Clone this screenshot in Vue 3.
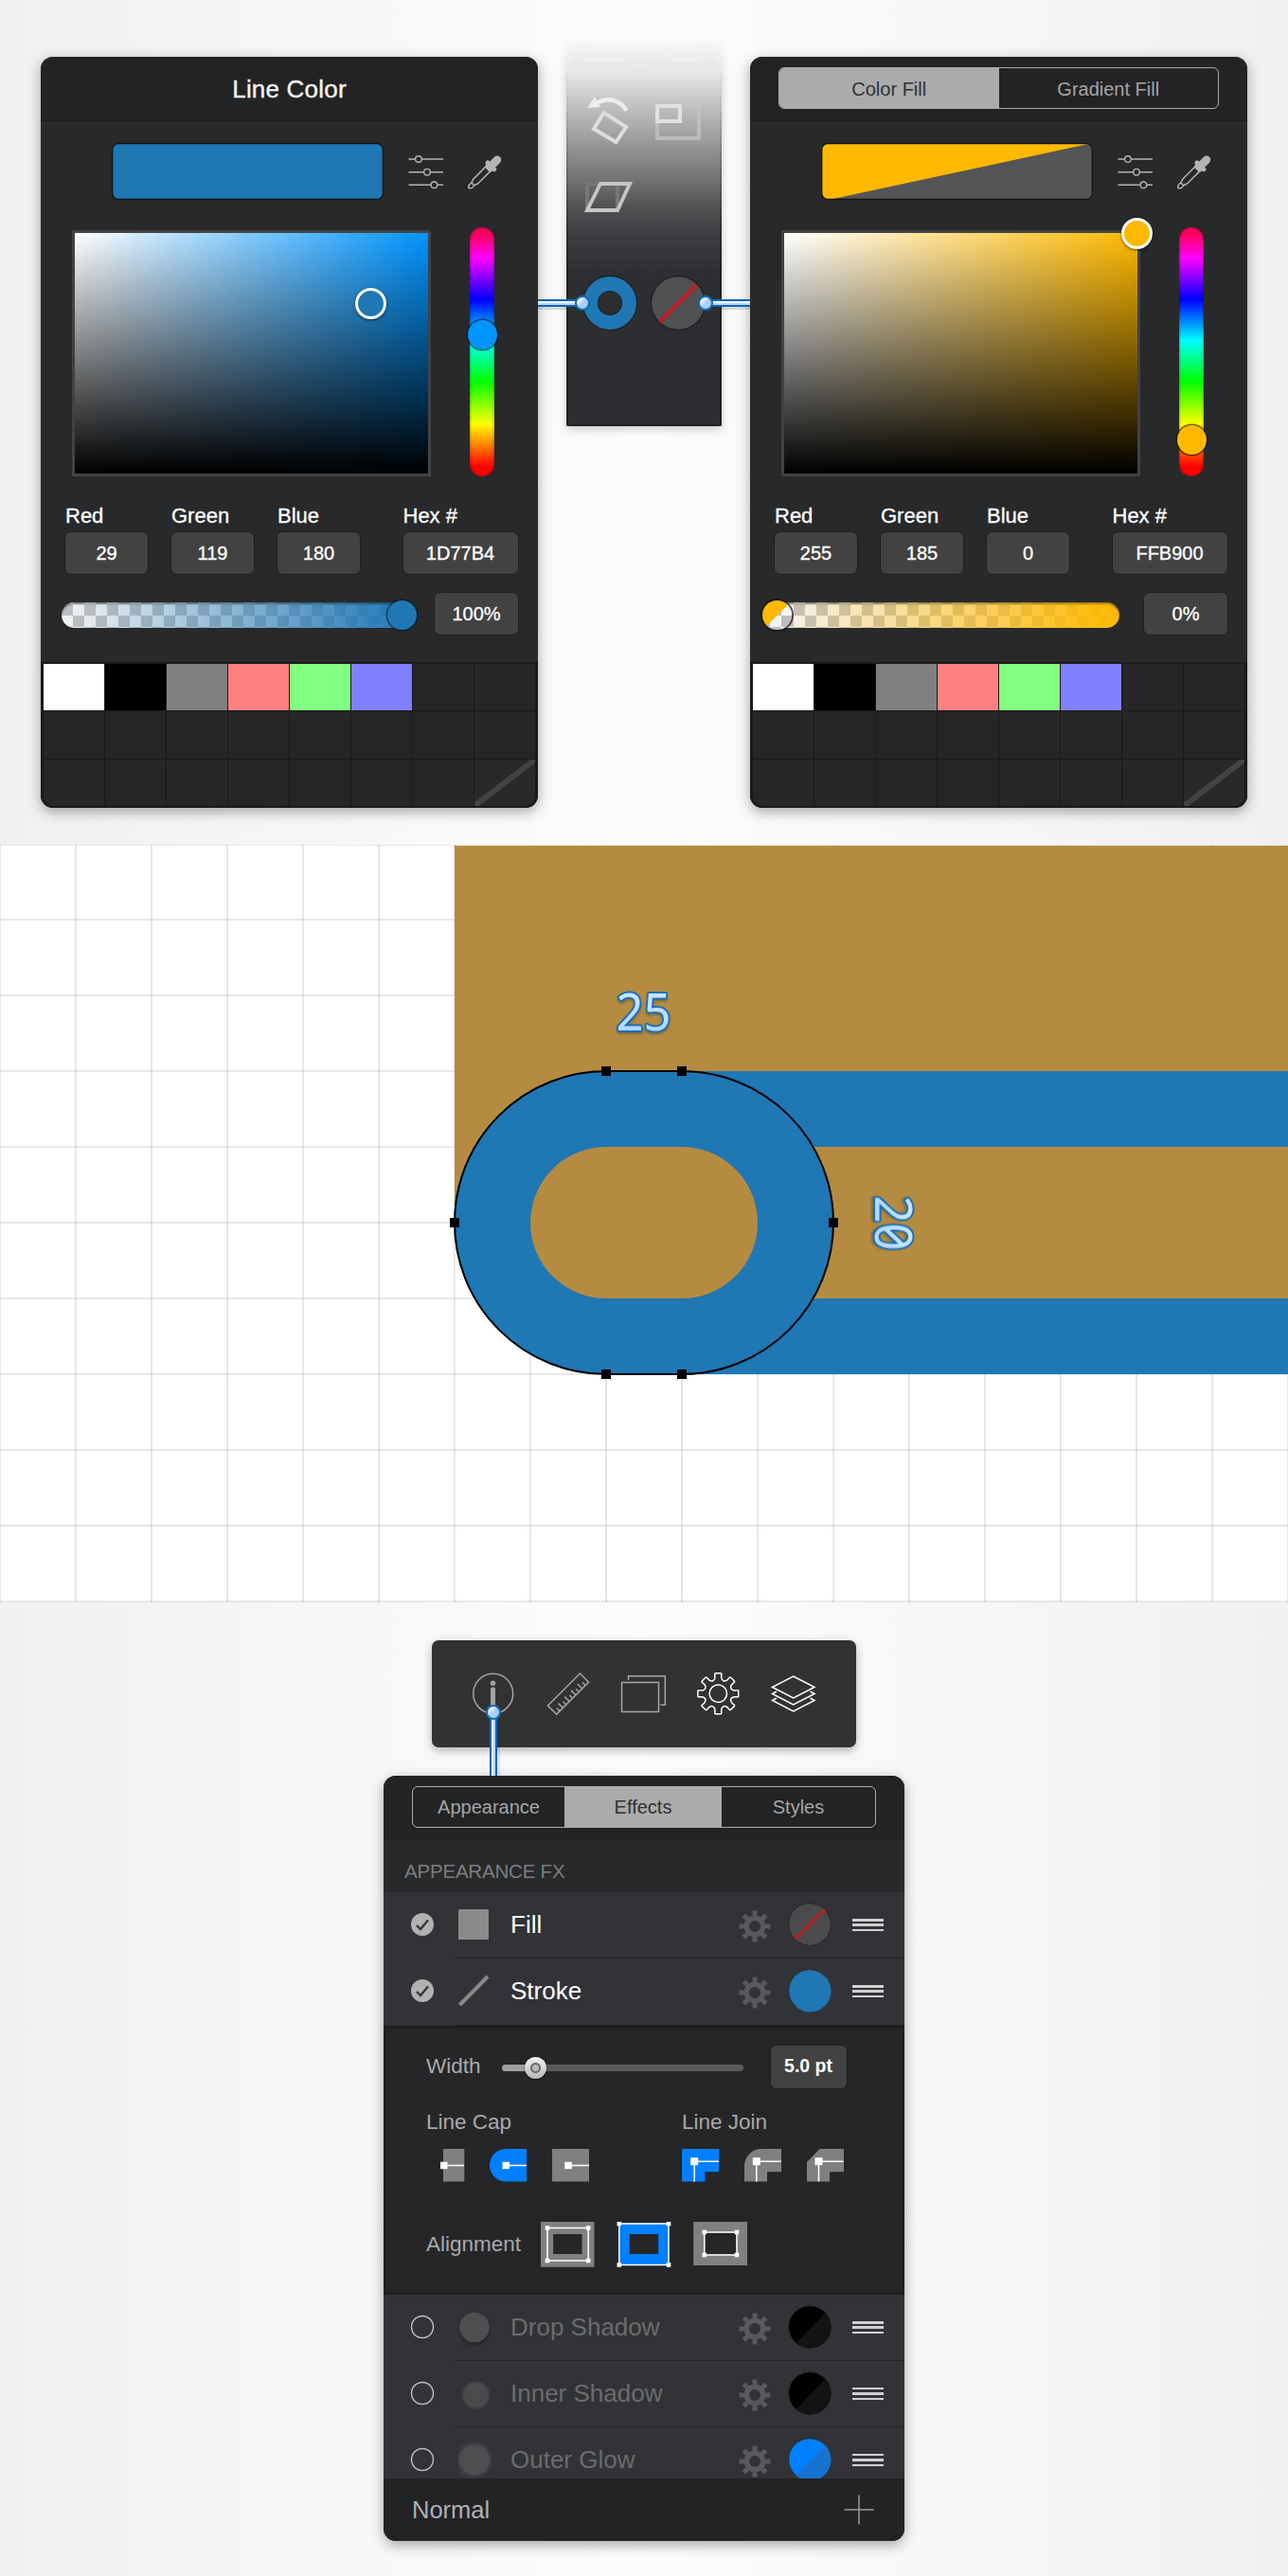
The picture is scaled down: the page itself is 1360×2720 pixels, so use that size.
<script setup>
const panels = [
  {
    id: 'line', title: 'Line Color', color: '#1f77b4', hue: '#0094ff',
    fields: [['Red', '29'], ['Green', '119'], ['Blue', '180'], ['Hex #', '1D77B4']],
    alpha: '100%', pick: { left: 312.5, top: 74.5 }, hueY: 113, alphaX: 359,
  },
  {
    id: 'fill', tabs: ['Color Fill', 'Gradient Fill'], color: '#ffb900', hue: '#ffb900',
    fields: [['Red', '255'], ['Green', '185'], ['Blue', '0'], ['Hex #', 'FFB900']],
    alpha: '0%', pick: { left: 373, top: 0.5 }, hueY: 224, alphaX: 6.5,
  },
]

const swatches = ['#ffffff', '#000000', '#808080', '#ff8080', '#80ff80', '#8080ff']
const cells = Array.from({ length: 24 }, (_, i) => swatches[i] || null)

const effects = [
  { name: 'Fill', on: true, icon: 'square', kind: 'none' },
  { name: 'Stroke', on: true, icon: 'line', kind: 'solid', a: '#1f77b4', b: '#1f77b4' },
]
const moreEffects = [
  { name: 'Drop Shadow', icon: 'drop', a: '#000', b: '#131313' },
  { name: 'Inner Shadow', icon: 'inner', a: '#000', b: '#131313' },
  { name: 'Outer Glow', icon: 'outer', a: '#0080ff', b: '#1773d0' },
]

const range = (from, to, step) => {
  const out = []
  for (let v = from; v <= to; v += step) out.push(v)
  return out
}
const gridX = range(0, 1360, 80)
const gridY = range(971, 1691, 80)
const nodes = [[640, 1131], [720, 1131], [480, 1291], [880, 1291], [640, 1451], [720, 1451]]

function gear(outer, root, tip, base, valley) {
  const pt = (r, t) => `${(r * Math.sin(t)).toFixed(2)} ${(-r * Math.cos(t)).toFixed(2)}`
  let d = ''
  for (let i = 0; i < 8; i++) {
    const t = (i * Math.PI) / 4
    d += `${i ? 'L' : 'M'}${pt(root, t - base)} L${pt(outer - 1, t - tip)} Q${pt(outer, t - tip)} ${pt(outer, t - tip + 0.05)} L${pt(outer, t + tip - 0.05)} Q${pt(outer, t + tip)} ${pt(outer - 1, t + tip)} L${pt(root, t + base)} Q${pt(valley, t + Math.PI / 8)} ${pt(root, t + Math.PI / 4 - base)} `
  }
  return d + 'Z'
}
const bigGear = gear(21.6, 17, 0.17, 0.2, 12.6)
const smallGear = gear(16.6, 11.6, 0.17, 0.2, 11.4)
const ticks = range(1, 9, 1)
</script>

<template>
  <main class="page">
    <section class="pickers">
      <template v-for="p in panels" :key="p.id">
        <article class="panel picker" :class="p.id">
          <header class="picker-head">
            <h2 v-if="p.title">{{ p.title }}</h2>
            <div v-else class="tabs two">
              <span class="tab active">{{ p.tabs[0] }}</span>
              <span class="tab">{{ p.tabs[1] }}</span>
            </div>
          </header>

          <div class="preview-row">
            <svg class="preview" width="287" height="60">
              <defs><clipPath :id="'clip-' + p.id"><rect x=".5" y=".5" width="286" height="59" rx="6.500" /></clipPath></defs>
              <g :clip-path="`url(#clip-${p.id})`">
                <rect width="287" height="60" :fill="p.color" />
                <path v-if="p.id === 'fill'" d="M8 60 L287 0 V60Z" fill="#545556" />
              </g>
              <rect x=".7" y=".7" width="285.600" height="58.600" rx="6" fill="none" stroke="#101315" stroke-width="1.300" />
            </svg>
            <svg class="sliders" width="38" height="38" fill="none" stroke="#b4b4b5" stroke-width="1.400">
              <path d="M.5 5H7.500M14.300 5H37M.5 18.700H16.500M23.500 18.700H37M.5 32.300H24M31 32.300H37" />
              <circle cx="10.900" cy="5" r="3.300" /><circle cx="20" cy="18.700" r="3.300" /><circle cx="27.400" cy="32.300" r="3.300" />
            </svg>
            <svg class="dropper" width="40" height="40">
              <g transform="translate(19.700 20) rotate(45)" fill="#b4b4b5">
                <rect x="-4.300" y="-23" width="8.600" height="14" rx="4.200" />
                <rect x="-7.300" y="-12" width="14.600" height="5" rx="2.500" />
                <rect x="-4.500" y="-8" width="9" height="4" rx="1" />
                <path d="M-3.400 -5V13.500L-2 17.500H2L3.400 13.500V-5M-2 17.500C-3 22 0 23.500 0 23.500C0 23.500 3 22 2 17.500" fill="none" stroke="#b4b4b5" stroke-width="1.500" />
              </g>
            </svg>
          </div>

          <div class="spectrum-row">
            <div class="field" :class="p.id">
              <i class="pick" :style="{ left: p.pick.left + 'px', top: p.pick.top + 'px', background: p.color }"></i>
            </div>
            <div class="hue"><i class="knob" :style="{ top: p.hueY + 'px', background: p.hue }"></i></div>
          </div>

          <div class="values">
            <label v-for="f in p.fields" :key="f[0]" class="value">
              <span>{{ f[0] }}</span>
              <b class="box">{{ f[1] }}</b>
            </label>
          </div>

          <div class="alpha-row">
            <div class="alpha" :class="p.id">
              <i class="knob" :class="'alpha-' + p.id" :style="{ left: p.alphaX + 'px' }"></i>
            </div>
            <b class="box">{{ p.alpha }}</b>
          </div>

          <div class="cells">
            <span v-for="(c, i) in cells" :key="i" class="cell" :class="{ none: i === 23 }" :style="c ? { background: c } : null"></span>
          </div>
        </article>

        <aside v-if="p.id === 'line'" class="tools">
          <svg width="164" height="430" viewBox="598 20 164 430">
            <defs>
              <linearGradient id="fade" x1="0" y1="40" x2="0" y2="290" gradientUnits="userSpaceOnUse">
                <stop offset="0" stop-color="#fbfbfb" />
                <stop offset=".06" stop-color="#f6f6f6" />
                <stop offset=".14" stop-color="#e9e9ea" />
                <stop offset=".32" stop-color="#b8b8b9" />
                <stop offset=".59" stop-color="#747475" />
                <stop offset=".72" stop-color="#505053" />
                <stop offset=".85" stop-color="#3b3c3f" />
                <stop offset="1" stop-color="#2d2e31" />
              </linearGradient>
              <linearGradient id="edge" x1="0" y1="40" x2="0" y2="290" gradientUnits="userSpaceOnUse">
                <stop offset="0" stop-color="#202124" stop-opacity="0" />
                <stop offset=".3" stop-color="#202124" stop-opacity=".04" />
                <stop offset=".7" stop-color="#202124" stop-opacity=".3" />
                <stop offset="1" stop-color="#202124" />
              </linearGradient>
            </defs>
            <path d="M598 40H762V447Q762 450 759 450H601Q598 450 598 447Z" fill="url(#fade)" />
            <path d="M599 40V448.500Q599 449 600 449H760Q761 449 761 448.500V40" fill="none" stroke="url(#edge)" stroke-width="2" />
            <g fill="none" stroke="#f7f7f7" stroke-width="3.500" opacity=".8">
              <path d="M620 44V63H660V44" /><circle cx="632" cy="54" r="4" /><path d="M645 58L651 50L656 58" />
              <path d="M700 42L704 60M708 42V63H739V42" />
            </g>
            <g fill="none" stroke="#e6e6e6" stroke-width="4">
              <path d="M631 108C643 102 655 106 661.500 116.500" stroke="#ededed" stroke-width="4.500" />
              <path d="M620 114L628 102L634 113Z" fill="#ededed" stroke="none" />
              <path d="M637.500 119L661 134L650.500 150L627 136Z" stroke="#dedede" />
              <rect x="694" y="112" width="44" height="34" stroke="#c4c4c5" opacity=".75" />
              <rect x="694" y="112" width="24" height="16" stroke="#e2e2e2" />
              <path d="M620 222V194H652V222Z" stroke="#77777a" />
              <path d="M634 194H665L652 222H620Z" stroke="#c6c6c6" stroke-width="3.800" />
            </g>
            <circle cx="644" cy="320" r="20.500" fill="none" stroke="#1f2023" stroke-width="17.500" />
            <circle cx="644" cy="320" r="20.500" fill="none" stroke="#1f77b4" stroke-width="15" />
            <circle cx="716" cy="320" r="28.500" fill="#505153" stroke="#232427" stroke-width="1.500" />
            <path d="M696.500 340L735.500 301" stroke="#b02426" stroke-width="5" />
          </svg>
        </aside>
      </template>
      <i class="wire left"></i>
      <i class="wire right"></i>
    </section>

    <svg class="canvas" width="1360" height="800" viewBox="0 892 1360 800">
      <rect y="892" width="1360" height="800" fill="#fff" />
      <g stroke="#000" stroke-opacity=".09" stroke-width="2">
        <line v-for="x in gridX" :key="'x' + x" :x1="x" :x2="x" y1="892" y2="1692" />
        <line v-for="y in gridY" :key="'y' + y" x1="0" x2="1360" :y1="y" :y2="y" />
        <line x1="0" x2="1360" y1="892" y2="892" />
      </g>
      <path d="M480 893H1360V1451H640A160 160 0 0 1 480 1291Z" fill="#b58b42" />
      <path d="M640 1131H1360V1211H640ZM640 1371H1360V1451H640Z" fill="#1f77b4" />
      <rect x="520" y="1171" width="320" height="240" rx="120" fill="#b58b42" stroke="#1f77b4" stroke-width="80" />
      <rect x="480" y="1131" width="400" height="320" rx="160" fill="none" stroke="#000" stroke-width="2" />
      <rect v-for="n in nodes" :key="n.join()" :x="n[0] - 5" :y="n[1] - 5" width="10" height="10" fill="#000" />
      <defs>
        <linearGradient id="digits" x1="0" y1="0" x2="0" y2="1"><stop offset="0" stop-color="#d6edff" /><stop offset="1" stop-color="#a9d2fb" /></linearGradient>
      </defs>
      <g class="measure">
        <g transform="translate(679.500 1088) scale(.94 1)"><text text-anchor="middle">25</text></g>
        <g transform="translate(944 1291.500) rotate(90) scale(.94 1)">
          <text x="0" y="20" text-anchor="middle">20</text>
        </g>
      </g>
    </svg>

    <section class="inspector">
      <nav class="toolbar">
        <svg width="448" height="113" viewBox="456 1732 448 113" fill="none" stroke-width="1.500">
          <g stroke="#a4a4a6">
            <circle cx="520.700" cy="1788.300" r="21" />
            <circle cx="520.500" cy="1777.200" r="2.800" fill="#a4a4a6" stroke="none" />
            <rect x="518" y="1781.500" width="5" height="24" rx="2" fill="#a4a4a6" stroke="none" />
            <g transform="translate(600 1788.600) rotate(-45)">
              <rect x="-24" y="-6.500" width="48" height="13" />
              <path v-for="t in ticks" :key="t" :d="`M${-24 + t * 4.8} 6.500v${t % 2 ? -4.500 : -7}`" />
            </g>
            <rect x="656.500" y="1776.500" width="39" height="31" />
            <path d="M663.500 1774V1769.700H702.300V1800.300H697.500" />
          </g>
          <g stroke="#fff">
            <g transform="translate(758.300 1788.300)"><path :d="bigGear" /><circle r="9.200" /></g>
            <path d="M837.700 1770L860 1781.500L837.700 1793L815.500 1781.500Z" />
            <path d="M820 1786L815.500 1788.500L837.700 1800L860 1788.500L855.500 1786" />
            <path d="M820 1793L815.500 1795.500L837.700 1807L860 1795.500L855.500 1793" />
          </g>
        </svg>
      </nav>
      <i class="wire down"></i>

      <article class="panel effects">
        <header class="effects-head">
          <div class="tabs three">
            <span class="tab">Appearance</span>
            <span class="tab active">Effects</span>
            <span class="tab">Styles</span>
          </div>
        </header>
        <h3>APPEARANCE FX</h3>

        <template v-for="(group, g) in [effects, moreEffects]" :key="g">
          <div v-if="g === 1" class="stroke-options">
            <div class="width-row">
              <span>Width</span>
              <div class="track"><i class="thumb"></i></div>
              <b class="box bold">5.0 pt</b>
            </div>
            <div class="cap-join">
              <div class="option">
                <span>Line Cap</span>
                <svg width="180" height="35" viewBox="450 2268 180 35">
                  <rect x="468" y="2268" width="22.300" height="34.500" fill="#808080" />
                  <path d="M556 2268H534.200A17.250 17.250 0 0 0 534.200 2302.500H556Z" fill="#0080ff" />
                  <rect x="583" y="2268" width="39" height="34.500" fill="#808080" />
                  <g fill="#fff">
                    <path d="M465 2281.700h7.500v7.500h-7.500zM472 2284.800h18v1.500h-18z" />
                    <path d="M530.500 2281.700h7.500v7.500h-7.500zM537 2284.800h19v1.500h-19z" />
                    <path d="M596.300 2281.700h7.500v7.500h-7.500zM603 2284.800h19v1.500h-19z" />
                  </g>
                </svg>
              </div>
              <div class="option">
                <span>Line Join</span>
                <svg width="180" height="35" viewBox="720 2268 180 35">
                  <path d="M720 2268H759V2292.300H744.400V2302.500H720Z" fill="#0080ff" />
                  <path d="M786 2302.500V2286A18 18 0 0 1 804 2268H825V2292.300H810V2302.500Z" fill="#808080" />
                  <path d="M852 2302.500V2282L865.500 2268H891V2292.300H876V2302.500Z" fill="#808080" />
                  <path v-for="x in [733.2, 798.8, 864.5]" :key="x" :d="`M${x - 4} 2277.300h8v8h-8zM${x - 0.75} 2282h1.500v20.500h-1.500zM${x} 2280.500h26v1.500h-26z`" fill="#fff" />
                </svg>
              </div>
            </div>
            <div class="align-row">
              <span>Alignment</span>
              <svg width="220" height="48" viewBox="571 2345 220 48" fill="none">
                <path fill-rule="evenodd" d="M571 2345h56.500v47.700h-56.500zM584.200 2358v21h30.300v-21z" fill="#808080" />
                <path fill-rule="evenodd" d="M654 2346.500h52v44.500h-52zM664.800 2358v21h30.400v-21z" fill="#0080ff" />
                <path fill-rule="evenodd" d="M732.200 2345h56.800v46h-56.800zM744 2356.500v23h33.500v-23z" fill="#808080" />
                <g v-for="b in [[578, 2351.5, 43.2, 34.5], [653.8, 2347, 52.2, 43.5], [743.8, 2356, 34.2, 24]]" :key="b[0]">
                  <rect :x="b[0]" :y="b[1]" :width="b[2]" :height="b[3]" stroke="#fff" stroke-width="1.500" />
                  <path v-for="c in 4" :key="c" :d="`M${b[0] + (c % 2) * b[2] - 2.3} ${b[1] + (c > 2 ? b[3] : 0) - 2.3}h4.600v4.600h-4.600z`" fill="#fff" />
                </g>
              </svg>
            </div>
          </div>

          <div class="rows" :class="{ clipped: g === 1 }">
            <div v-for="e in group" :key="e.name" class="row" :class="{ off: !e.on }">
              <svg class="check" width="26" height="26" viewBox="-13 -13 26 26">
                <template v-if="e.on">
                  <circle r="12" fill="#b1b1b2" />
                  <path d="M-6 1L-2 5L6 -4.500" fill="none" stroke="#323336" stroke-width="2.300" />
                </template>
                <circle v-else r="11.500" fill="none" stroke="#c2c2c3" stroke-width="1.400" />
              </svg>
              <div class="row-main">
                <svg class="glyph" width="36" height="42" viewBox="-18 -21 36 42">
                  <rect v-if="e.icon === 'square'" x="-17" y="-16" width="32" height="32" rx="1" fill="#8a8a8a" />
                  <path v-else-if="e.icon === 'line'" d="M-15.500 15L14 -15" stroke="#8a8a8a" stroke-width="4" />
                  <circle v-else-if="e.icon === 'drop'" cy=".5" r="15.800" fill="#4d4e50" class="drop" />
                  <circle v-else-if="e.icon === 'inner'" cx="1.500" cy="2" r="14" fill="#4a4b4d" class="soft" />
                  <circle v-else cy=".5" r="16" fill="#4d4e50" class="glow" />
                </svg>
                <span class="name">{{ e.name }}</span>
                <svg class="cog" width="36" height="36" viewBox="-18 -18 36 36">
                  <path :d="smallGear" fill="#58595c" /><circle r="6" fill="#323336" />
                </svg>
                <svg class="tint" width="48" height="48" viewBox="-24 -24 48 48">
                  <template v-if="e.kind === 'none'">
                    <circle r="22.300" fill="#4b4b4d" stroke="#262729" />
                    <path d="M-15.500 15.500L15.500 -15.500" stroke="#b02426" stroke-width="3.500" />
                  </template>
                  <template v-else>
                    <circle r="22.300" :fill="e.a" stroke="#262729" stroke-width=".8" />
                    <path d="M-14.500 17A22.300 22.300 0 0 0 16.500 -15Z" :fill="e.b" />
                  </template>
                </svg>
                <span class="grip"></span>
              </div>
            </div>
          </div>
        </template>

        <footer>
          <span>Normal</span>
          <svg width="32" height="32" fill="none" stroke="#9c9c9d" stroke-width="1.500"><path d="M.5 16H31.500M16 .5V31.500" /></svg>
        </footer>
      </article>
    </section>
  </main>
</template>

<style>
body { margin: 0; }
</style>

<style scoped>
.page {
  width: 1360px;
  height: 2720px;
  overflow: hidden;
  font-family: "Liberation Sans", Arial, sans-serif;
  background: linear-gradient(90deg, #f0f0f0 0, #f5f5f5 17%, #f9f9f9 37%, #fcfcfc 50%, #f9f9f9 63%, #f5f5f5 83%, #f0f0f0 100%);
}
h2, h3 { margin: 0; font-weight: 400; }
.panel {
  display: flex;
  flex-direction: column;
  overflow: hidden;
  border-radius: 13px;
  background: #28292b;
  box-shadow: 0 4px 14px rgba(0, 0, 0, .35);
}
.pickers {
  position: relative;
  display: flex;
  align-items: flex-start;
  gap: 30px;
  height: 892px;
  padding-left: 43px;
  box-sizing: border-box;
}
.picker { width: 525px; height: 793px; margin-top: 60px; flex: none; }
.picker-head {
  display: flex;
  align-items: center;
  justify-content: center;
  height: 68px;
  box-sizing: border-box;
  background: #222325;
  border-bottom: 1px solid #1f2022;
}
.picker-head h2 {
  font-size: 26px;
  line-height: 30px;
  color: #f2f2f2;
  letter-spacing: .2px;
  -webkit-text-stroke: .4px #f2f2f2;
}
.tabs {
  display: grid;
  height: 44px;
  box-sizing: border-box;
  overflow: hidden;
  border: 1.500px solid #ababab;
  border-radius: 6px;
}
.tabs.two { width: 465px; grid-template-columns: 1fr 1fr; margin-top: -2px; }
.tabs.three { width: 490px; grid-template-columns: 160px 166px 1fr; }
.tab { font-size: 20px; line-height: 44px; text-align: center; color: #a5a5a6; }
.tabs.three .tab { line-height: 43px; }
.tab.active { background: #ababab; color: #303133; }
.preview-row { display: flex; height: 60px; padding: 23px 0 0 74.500px; }
.sliders { margin: 12px 0 0 26.500px; }
.dropper { margin: 11px 0 0 23px; }
.spectrum-row { display: flex; height: 263px; margin-top: 29px; padding-left: 33px; }
.field {
  position: relative;
  width: 373px;
  height: 254px;
  margin-top: 3px;
  border: 3px solid #424244;
}
.field.line { background: linear-gradient(0deg, #000, transparent), linear-gradient(90deg, #fff, #0094ff); }
.field.fill { background: linear-gradient(0deg, #000, transparent), linear-gradient(90deg, #fff, #ffb900); }
.pick {
  position: absolute;
  width: 27px;
  height: 27px;
  margin: -17px 0 0 -17px;
  border: 3.500px solid #fff;
  border-radius: 50%;
  box-shadow: 0 1px 3px rgba(0, 0, 0, .6);
}
.hue {
  position: relative;
  width: 26px;
  height: 263px;
  margin-left: 41px;
  border-radius: 13px;
  background: linear-gradient(180deg, #ff0060 3%, #ff00ff 12.500%, #0000ff 29%, #00ffff 45.500%, #00ff00 62%, #ffff00 79%, #ff0000 96%);
  box-shadow: inset 0 0 3px rgba(0, 0, 0, .5);
}
.knob {
  position: absolute;
  width: 31px;
  height: 31px;
  border-radius: 50%;
  box-shadow: 0 0 0 1.500px rgba(5, 20, 25, .6);
}
.hue .knob { left: -2.500px; margin-top: -15.500px; }
.values { display: grid; grid-template-columns: 89px 89px 89px 123px; column-gap: 23px; padding: 26px 0 0 25px; }
.value:last-child { margin-left: 20.500px; }
.value { display: flex; flex-direction: column; }
.value span { height: 32px; font-size: 22px; line-height: 31px; color: #fff; padding-left: 1px; -webkit-text-stroke: .3px #fff; white-space: nowrap; }
.box {
  display: block;
  height: 46px;
  box-sizing: border-box;
  border: 1.500px solid #1d1e1f;
  border-radius: 7px;
  background: #424242;
  font-size: 20px;
  font-weight: 400;
  line-height: 45px;
  text-align: center;
  color: #fff;
  -webkit-text-stroke: .3px #fff;
}
.value:last-child .box { width: 123px; }
.alpha-row { display: flex; align-items: center; padding: 18px 0 0 22px; }
.alpha-row .box { width: 90px; margin-left: 25px; line-height: 45px; }
.alpha {
  position: relative;
  width: 368px;
  height: 27px;
  margin-top: 2px;
  border-radius: 14px;
  box-shadow: inset 0 2px 2px rgba(0, 0, 0, .35);
}
.alpha.line { background: linear-gradient(90deg, rgba(29, 119, 180, 0), #1f77b4), repeating-conic-gradient(#f4f4f4 0 25%, #c2c2c2 0 50%) 0 2px / 24px 24px; }
.alpha.fill { background: linear-gradient(90deg, rgba(255, 185, 0, 0), #ffb900), repeating-conic-gradient(#f4f4f4 0 25%, #c2c2c2 0 50%) 0 2px / 24px 24px; }
.alpha .knob { top: -2px; margin-left: -15.500px; }
.alpha-line { background: #1f77b4; }
.alpha-fill { background: linear-gradient(135deg, #ffb900 50%, transparent 50%), repeating-conic-gradient(#f4f4f4 0 25%, #bdbdbd 0 50%) 8px 4px / 24px 24px; }
.alpha .alpha-fill { box-shadow: 0 0 0 2px rgba(20, 21, 22, .75); }
.cells {
  display: grid;
  flex: 1;
  grid-template-columns: repeat(8, 1fr);
  grid-template-rows: repeat(3, 1fr);
  gap: 1.300px;
  margin-top: 28px;
  padding: 2px 3px;
  background: #1a1a1b;
}
.cell { background: #262626; }
.cell.none { background: linear-gradient(to bottom right, #292929 46%, #434343 46.500%, #434343 53.500%, #292929 54%); }
.cell:nth-child(17) { border-bottom-left-radius: 10px; }
.cell:nth-child(24) { border-bottom-right-radius: 10px; }
.tools {
  width: 164px;
  height: 430px;
  margin-top: 20px;
  flex: none;
  filter: drop-shadow(0 3px 5px rgba(0, 0, 0, .2));
}
.tools svg { display: block; -webkit-mask-image: linear-gradient(180deg, transparent 18px, #000 60px); mask-image: linear-gradient(180deg, transparent 18px, #000 60px); }
.wire {
  position: absolute;
  top: 316px;
  width: 47px;
  height: 8px;
  background: linear-gradient(180deg, #1265ae 0 2px, #eaf6ff 2px 4px, #b5d8f6 4px 6px, #1265ae 6px 8px);
  box-shadow: 0 3px 0 rgba(20, 60, 90, .15);
}
.wire::after {
  content: "";
  position: absolute;
  top: -4px;
  width: 12px;
  height: 12px;
  border: 2px solid #0f6cb8;
  border-radius: 50%;
  background: linear-gradient(135deg, #e2efff 30%, #abcffa 50%);
}
.wire.left { left: 568px; }
.wire.left::after { right: -8px; }
.wire.right { left: 745px; }
.wire.right::after { left: -8px; }
.canvas { display: block; }
.measure text {
  font-family: "Noto Sans", "DejaVu Sans", sans-serif;
  font-size: 54px;
  font-feature-settings: "zero" 1;
  fill: url(#digits);
  stroke: #1b70b8;
  stroke-width: 4px;
  stroke-linejoin: round;
  paint-order: stroke;
  filter: drop-shadow(0 2px 1px rgba(40, 60, 60, .4));
}
.inspector {
  position: relative;
  display: flex;
  flex-direction: column;
  align-items: center;
  gap: 30px;
  padding-top: 40px;
}
.toolbar {
  width: 448px;
  height: 113px;
  border-radius: 7px;
  background: #323235;
  box-shadow: 0 3px 10px rgba(0, 0, 0, .3);
}
.wire.down {
  top: 116px;
  left: 517px;
  width: 8px;
  height: 67px;
  background: linear-gradient(90deg, #1265ae 0 2px, #eaf6ff 2px 4px, #b5d8f6 4px 6px, #1265ae 6px 8px);
  box-shadow: 3px 0 0 rgba(20, 60, 90, .12);
}
.wire.down::after { top: -8px; left: -4px; }
.effects { width: 550px; height: 808px; }
.effects-head {
  display: flex;
  justify-content: center;
  height: 67px;
  box-sizing: border-box;
  padding-top: 11px;
  background: #222325;
  border-bottom: 1px solid #1f2022;
}
.effects h3 {
  height: 56px;
  padding-left: 22px;
  box-sizing: border-box;
  padding-top: 18px;
  font-size: 20.500px;
  line-height: 31px;
  letter-spacing: -.2px;
  color: #7d7d7f;
}
.rows { background: #323336; flex: none; }
.rows.clipped { height: 194px; overflow: hidden; }
.row { display: flex; height: 70.300px; }
.check { margin: 21px 21.500px 0 27.500px; flex: none; }
.row-main {
  display: flex;
  flex: 1;
  box-sizing: border-box;
  border-bottom: 1.500px solid #232426;
}
.glyph { margin: 13px 0 0 2.500px; }
.name { flex: 1; padding-left: 20.500px; font-size: 26px; line-height: 69px; color: #fff; }
.off .name { color: #6b6c6e; }
.cog { margin: 18px 16px 0 0; }
.tint { margin: 10px 21px 0 0; }
.grip {
  width: 33px;
  height: 13px;
  margin: 28px 22px 0 0;
  background: repeating-linear-gradient(180deg, #d0d0d2 0 2.500px, transparent 2.500px 5.300px);
}
.drop { filter: drop-shadow(0 2px 2px rgba(0, 0, 0, .35)); }
.soft { filter: blur(1.200px); }
.glow { filter: drop-shadow(0 0 3px #55565a); }
.stroke-options {
  height: 284px;
  box-sizing: border-box;
  padding: 20px 0 0 45px;
  background: #262628;
  box-shadow: inset 0 2px 3px #1c1c1e, inset 0 -2px 3px #1f1f21;
  font-size: 22.500px;
  color: #a9a9aa;
  flex: none;
}
.width-row { display: flex; align-items: center; height: 47px; }
.width-row > span { width: 80px; }
.track {
  position: relative;
  width: 255px;
  height: 7px;
  margin-top: 2px;
  border-radius: 4px;
  background: linear-gradient(90deg, #a0a0a0 0 30px, #5b5b5d 30px);
}
.thumb {
  position: absolute;
  left: 24px;
  top: -8px;
  width: 23px;
  height: 23px;
  border-radius: 50%;
  background: radial-gradient(circle, #bbb 0 3px, #6d6d6d 4px 5px, transparent 6px), linear-gradient(180deg, #f4f4f4, #b5b5b5);
  box-shadow: 0 1px 2px rgba(0, 0, 0, .8);
}
.box.bold { width: 82px; height: 47px; margin-left: 27.500px; font-size: 19.500px; font-weight: 700; line-height: 43px; -webkit-text-stroke: 0; }
.cap-join { display: flex; padding-top: 17px; }
.option { display: flex; flex-direction: column; width: 270px; flex: none; }
.option:last-child { width: 180px; }
.option span { line-height: 36px; margin-bottom: 10px; }
.align-row { display: flex; align-items: center; margin-top: 42px; gap: 19.500px; height: 48px; }
.align-row span { width: 101px; }
footer {
  display: flex;
  align-items: center;
  justify-content: space-between;
  flex: 1;
  padding: 1px 32.500px 0 30px;
  background: #222325;
  font-size: 25.500px;
  color: #b0b0b1;
}
</style>
